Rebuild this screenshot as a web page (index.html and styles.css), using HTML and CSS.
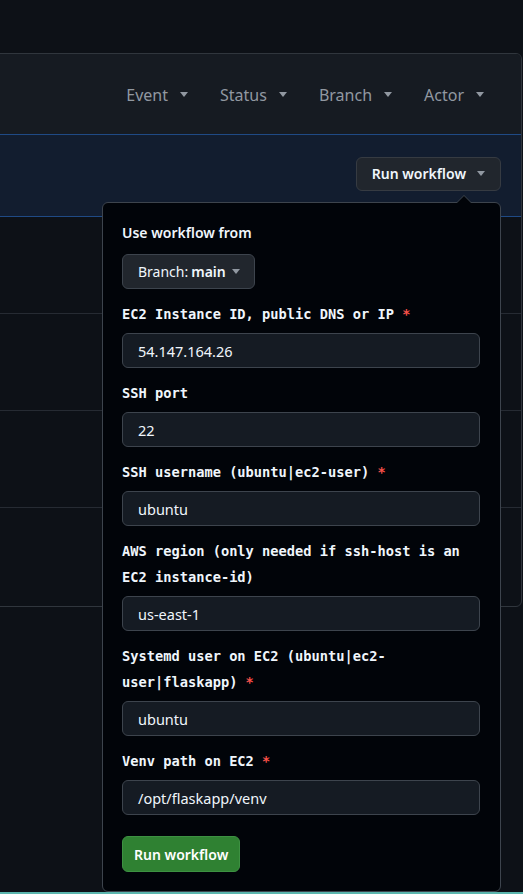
FILE: index.html
```html
<!DOCTYPE html>
<html>
<head>
<meta charset="utf-8">
<link rel="stylesheet" href="styles.css">
</head>
<body>
<div class="page">
  <div class="box">
    <div class="box-header">
      <span class="filter">Event <span class="caret"></span></span>
      <span class="filter">Status <span class="caret"></span></span>
      <span class="filter">Branch <span class="caret"></span></span>
      <span class="filter">Actor <span class="caret"></span></span>
    </div>
    <div class="blue-row">
      <button class="btn-run">Run workflow <span class="caret light"></span></button>
    </div>
    <div class="row"></div>
    <div class="row"></div>
    <div class="row"></div>
    <div class="row last"></div>
  </div>
</div>

<div class="popover">
  <div class="arrow"></div>
  <div class="title">Use workflow from</div>
  <button class="btn-branch">Branch: <b>main</b> <span class="caret light"></span></button>

  <div class="field">
    <label class="label">EC2 Instance ID, public DNS or IP <span class="req">*</span></label>
    <div class="input">54.147.164.26</div>
  </div>
  <div class="field">
    <label class="label">SSH port</label>
    <div class="input">22</div>
  </div>
  <div class="field">
    <label class="label">SSH username (ubuntu|ec2-user) <span class="req">*</span></label>
    <div class="input">ubuntu</div>
  </div>
  <div class="field">
    <label class="label">AWS region (only needed if ssh-host is an EC2 instance-id)</label>
    <div class="input">us-east-1</div>
  </div>
  <div class="field">
    <label class="label">Systemd user on EC2 (ubuntu|ec2-user|flaskapp) <span class="req">*</span></label>
    <div class="input">ubuntu</div>
  </div>
  <div class="field">
    <label class="label">Venv path on EC2 <span class="req">*</span></label>
    <div class="input">/opt/flaskapp/venv</div>
  </div>
  <button class="btn-green">Run workflow</button>
</div>

<div class="bottom-bar"></div>
</body>
</html>
```

FILE: styles.css
```css
* { box-sizing: border-box; }
html, body {
  margin: 0;
  padding: 0;
}
body {
  background: #0d1117;
  width: 523px;
  height: 894px;
  overflow: hidden;
  position: relative;
  font-family: "Segoe UI", "Noto Sans", "Liberation Sans", sans-serif;
  color: #e6edf3;
}
.page {
  padding-top: 53px;
}
.box {
  margin-left: -10px;
  width: 532px;
  border: 1px solid #30363d;
  border-radius: 6px;
  overflow: hidden;
}
.box-header {
  height: 80px;
  background: #161b22;
  display: flex;
  justify-content: flex-end;
  align-items: center;
  gap: 32px;
  padding-right: 37px;
  padding-top: 1px;
}
.filter {
  color: #9198a1;
  font-size: 16px;
  display: flex;
  align-items: center;
  gap: 12px;
}
.caret {
  display: inline-block;
  width: 0;
  height: 0;
  border-left: 4.5px solid transparent;
  border-right: 4.5px solid transparent;
  border-top: 5px solid #9198a1;
}
.caret.light { border-top-color: #9198a1; }
.blue-row {
  height: 83px;
  background: #121d2f;
  border-top: 1px solid #1f4a85;
  border-bottom: 1px solid #1f4a85;
  display: flex;
  justify-content: flex-end;
  align-items: center;
  padding-right: 20px;
  padding-bottom: 4px;
}
.btn-run {
  height: 34px;
  background: #21262d;
  border: 1px solid #363b42;
  border-radius: 6px;
  color: #f0f6fc;
  font-family: inherit;
  font-weight: 600;
  font-size: 14px;
  padding: 0 15px 0 15px;
  display: flex;
  align-items: center;
  gap: 11px;
}
.row {
  height: 97px;
  border-bottom: 1px solid #262b33;
}
.row.last {
  height: 98px;
  border-bottom: none;
}
.popover {
  position: absolute;
  left: 102px;
  top: 202px;
  width: 399px;
  background: #010409;
  border: 1px solid #3d444d;
  border-radius: 6px;
  padding: 20px 20px 19px 19px;
}
.arrow {
  position: absolute;
  top: -8px;
  right: 28px;
  width: 0;
  height: 0;
  border-left: 8px solid transparent;
  border-right: 8px solid transparent;
  border-bottom: 8px solid #3d444d;
}
.arrow::after {
  content: "";
  position: absolute;
  left: -7px;
  top: 1px;
  border-left: 7px solid transparent;
  border-right: 7px solid transparent;
  border-bottom: 7px solid #010409;
}
.title {
  font-weight: 600;
  font-size: 14px;
  line-height: 20px;
  color: #f0f6fc;
  margin-bottom: 11px;
}
.btn-branch {
  height: 35px;
  background: #21262d;
  border: 1px solid #3d444d;
  border-radius: 6px;
  color: #f0f6fc;
  font-family: inherit;
  font-size: 14px;
  padding: 0 14px 0 15px;
  display: flex;
  align-items: center;
  gap: 6px;
}
.btn-branch b { font-weight: 600; margin-left: -3px; }
.field {
  margin-top: 12px;
  display: flex;
  flex-direction: column;
}
.label {
  font-family: "DejaVu Sans Mono", "Liberation Mono", monospace;
  font-weight: bold;
  font-size: 13.7px;
  line-height: 26px;
  color: #f0f6fc;
  margin-bottom: 6px;
}
.req { color: #f85149; }
.input {
  height: 35px;
  background: #151b23;
  border: 1px solid #3d444d;
  border-radius: 6px;
  padding: 0 15px;
  font-size: 14.5px;
  display: flex;
  align-items: center;
  color: #f0f6fc;
}
.btn-green {
  margin-top: 21px;
  height: 36px;
  background: #2f8132;
  border: 1px solid #3d9142;
  border-radius: 6px;
  color: #ffffff;
  font-family: inherit;
  font-weight: 600;
  font-size: 14px;
  padding: 0 11px;
  display: flex;
  align-items: center;
}
.bottom-bar {
  position: absolute;
  left: 0;
  right: 0;
  bottom: 0;
  height: 2px;
  background: #5bb6ae;
}
```
